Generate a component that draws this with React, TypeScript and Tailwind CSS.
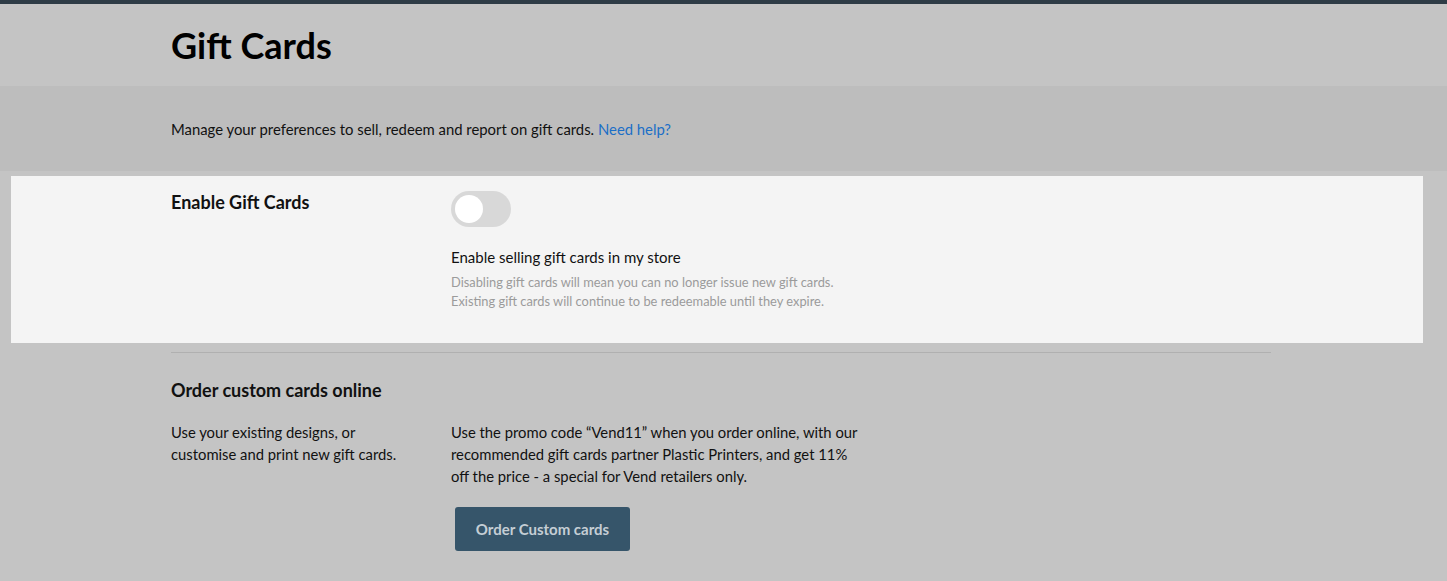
import React from "react";

const App = () => {
  return (
    <div className="min-h-[581px] bg-[#c4c4c4] font-['Lato','Noto_Sans',sans-serif] text-[#111]">
      <div className="h-1 bg-[#2e3c46]" />

      {/* header */}
      <div className="h-[82px] flex items-center">
        <div className="w-[1100px] ml-[171px]">
          <h1 className="text-[36px] font-bold leading-none text-black">Gift Cards</h1>
        </div>
      </div>

      <div className="h-[85px] bg-[#bdbdbd] flex items-center">
        <p className="ml-[171px] text-[14.85px] pt-[2px]">
          Manage your preferences to sell, redeem and report on gift cards.{" "}
          <a className="text-[#1b6fc7]">Need help?</a>
        </p>
      </div>

      {/* enable section, highlighted */}
      <div className="mt-[5px] ml-[11px] mr-[24px] bg-[#f4f4f4] h-[167px] pt-[15px]">
        <div className="ml-[160px] flex">
          <div className="w-[280px]">
            <h2 className="text-[18px] font-bold leading-[22px]">Enable Gift Cards</h2>
          </div>
          <div>
            <div className="w-[60px] h-[36px] rounded-full bg-[#d8d8d8] flex items-center px-[4px]">
              <div className="w-[28px] h-[28px] rounded-full bg-white" />
            </div>
            <p className="mt-[20px] text-[15px] leading-[20px]">Enable selling gift cards in my store</p>
            <p className="mt-[6px] text-[12.85px] leading-[19px] text-[#9b9b9b]">
              Disabling gift cards will mean you can no longer issue new gift cards.
              <br />
              Existing gift cards will continue to be redeemable until they expire.
            </p>
          </div>
        </div>
      </div>

      <div className="ml-[171px] w-[1100px] border-t border-[#b0b0b0] mt-[9px]" />

      {/* order section */}
      <div className="ml-[171px] w-[1100px] pt-[25px]">
        <h2 className="text-[18px] font-bold leading-[24px]">Order custom cards online</h2>
        <div className="flex mt-[19px]">
          <p className="w-[280px] text-[14.8px] leading-[22px]">
            Use your existing designs, or
            <br />
            customise and print new gift cards.
          </p>
          <div>
            <p className="text-[14.8px] leading-[22px]">
              Use the promo code “Vend11” when you order online, with our
              <br />
              recommended gift cards partner Plastic Printers, and get 11%
              <br />
              off the price - a special for Vend retailers only.
            </p>
            <button className="ml-[4px] mt-[20px] w-[175px] h-[44px] rounded-[3px] bg-[#36556a] text-[#c5ced5] text-[15px] font-bold">
              Order Custom cards
            </button>
          </div>
        </div>
      </div>
    </div>
  );
};

export default App;
